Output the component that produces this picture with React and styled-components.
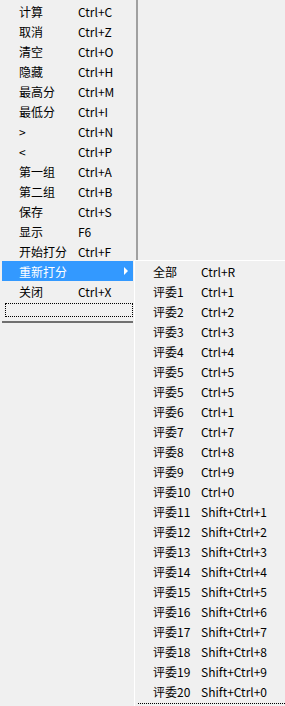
import React from 'react'
import styled, { createGlobalStyle } from 'styled-components'

const GlobalStyle = createGlobalStyle`
  html, body {
    margin: 0;
    padding: 0;
    background: #f0f0f0;
    font-family: "Noto Sans CJK SC", "Liberation Sans", sans-serif;
    font-size: 12px;
    color: #000;
  }
`

const Page = styled.div`
  position: relative;
  width: 285px;
  height: 706px;
  overflow: hidden;
  background: #f0f0f0;
`

const Menu = styled.div`
  width: 136px;
  border-right: 2px solid #a0a0a0;
  padding-top: 1px;
  box-sizing: content-box;
`

const Row = styled.div`
  display: flex;
  align-items: center;
  height: 20px;
  margin: 0 ${(p) => (p.$sub ? 0 : 3)}px 0 ${(p) => (p.$sub ? 0 : 2)}px;
  padding-left: ${(p) => (p.$sub ? 18 : 17)}px;
  background: ${(p) => (p.$active ? '#3399ff' : 'transparent')};
  color: ${(p) => (p.$active ? '#fff' : '#000')};
  white-space: nowrap;
  position: relative;
`

const Label = styled.span`
  width: ${(p) => p.$w}px;
  flex: none;
`

const Key = styled.span`
  flex: none;
`

const Arrow = styled.span`
  position: absolute;
  right: 5px;
  top: 6px;
  width: 0;
  height: 0;
  border-top: 4px solid transparent;
  border-bottom: 4px solid transparent;
  border-left: 4px solid #fff;
`

const Focus = styled.div`
  height: 12px;
  margin: 2px 3px 0 5px;
  border: 1px dotted #000;
`

const Rule = styled.div`
  height: 2px;
  margin: 4px 3px 0 2px;
  background: #707070;
`

const Filler = styled.div`
  height: 2px;
`

const SubMenu = styled.div`
  position: absolute;
  left: 134px;
  top: 260px;
  right: 0;
  bottom: 0;
  background: #f0f0f0;
  border-top: 1px solid #fff;
  border-left: 1px solid #fff;
`

const SubFocus = styled.div`
  height: 0;
  margin: 2px 0 0 3px;
  border-top: 1px dotted #000;
`

const mainItems = [
  ['计算', 'Ctrl+C'],
  ['取消', 'Ctrl+Z'],
  ['清空', 'Ctrl+O'],
  ['隐藏', 'Ctrl+H'],
  ['最高分', 'Ctrl+M'],
  ['最低分', 'Ctrl+I'],
  ['>', 'Ctrl+N'],
  ['<', 'Ctrl+P'],
  ['第一组', 'Ctrl+A'],
  ['第二组', 'Ctrl+B'],
  ['保存', 'Ctrl+S'],
  ['显示', 'F6'],
  ['开始打分', 'Ctrl+F'],
  ['重新打分', '', true],
  ['关闭', 'Ctrl+X'],
]

const subItems = [
  ['全部', 'Ctrl+R'],
  ['评委1', 'Ctrl+1'],
  ['评委2', 'Ctrl+2'],
  ['评委3', 'Ctrl+3'],
  ['评委4', 'Ctrl+4'],
  ['评委5', 'Ctrl+5'],
  ['评委5', 'Ctrl+5'],
  ['评委6', 'Ctrl+1'],
  ['评委7', 'Ctrl+7'],
  ['评委8', 'Ctrl+8'],
  ['评委9', 'Ctrl+9'],
  ['评委10', 'Ctrl+0'],
  ['评委11', 'Shift+Ctrl+1'],
  ['评委12', 'Shift+Ctrl+2'],
  ['评委13', 'Shift+Ctrl+3'],
  ['评委14', 'Shift+Ctrl+4'],
  ['评委15', 'Shift+Ctrl+5'],
  ['评委16', 'Shift+Ctrl+6'],
  ['评委17', 'Shift+Ctrl+7'],
  ['评委18', 'Shift+Ctrl+8'],
  ['评委19', 'Shift+Ctrl+9'],
  ['评委20', 'Shift+Ctrl+0'],
]

export default function App() {
  return (
    <>
      <GlobalStyle />
      <Page>
        <Menu>
          {mainItems.map(([label, key, active], i) => (
            <Row key={i} $active={active}>
              <Label $w={59}>{label}</Label>
              <Key>{key}</Key>
              {active && <Arrow />}
            </Row>
          ))}
          <Focus />
          <Rule />
          <Filler />
        </Menu>

        <SubMenu>
          {subItems.map(([label, key], i) => (
            <Row key={i} $sub>
              <Label $w={48}>{label}</Label>
              <Key>{key}</Key>
            </Row>
          ))}
          <SubFocus />
        </SubMenu>
      </Page>
    </>
  )
}
